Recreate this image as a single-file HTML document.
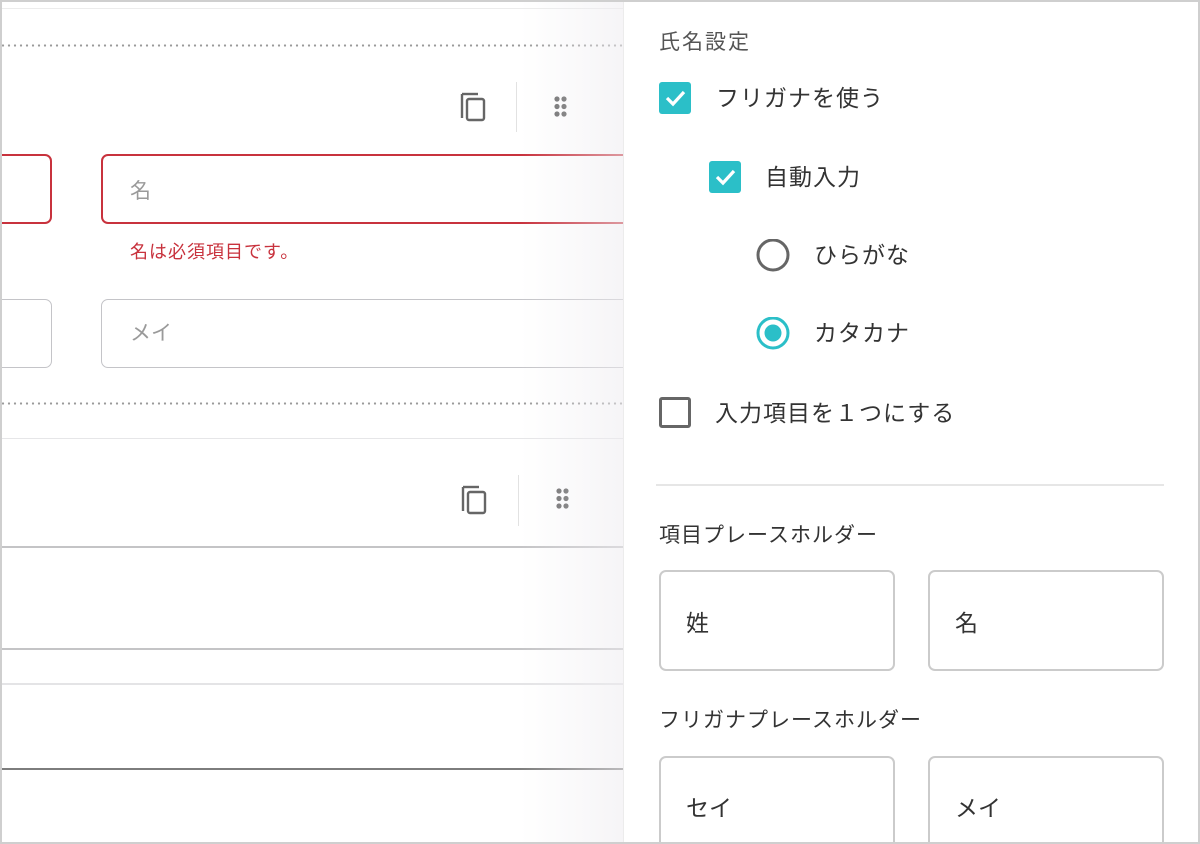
<!DOCTYPE html>
<html><head><meta charset="utf-8">
<style>
*{box-sizing:border-box;margin:0;padding:0}
html,body{width:1200px;height:844px;overflow:hidden;background:#fff}
body{font-family:"Liberation Sans","Noto Sans CJK JP",sans-serif;position:relative}
.frame{position:absolute;left:0;top:0;width:1200px;height:844px;border:2px solid #cfcfcf;pointer-events:none;z-index:10}
.left{position:absolute;left:0;top:0;width:623px;height:844px;background:#fff;overflow:hidden}
.shade{position:absolute;left:520px;top:0;width:103px;height:844px;background:linear-gradient(90deg,rgba(240,238,242,0),rgba(238,236,240,.55));}
.dots{position:absolute;left:0;width:623px;height:3px;background-image:radial-gradient(circle,#9a9a9a 1px,transparent 1.3px);background-size:6px 3px}
.hl{position:absolute;left:0;width:623px}
.abs{position:absolute}
.inp{position:absolute;border-radius:7px;background:#fff}
.t{position:absolute;white-space:nowrap;line-height:1}
.right{position:absolute;left:623px;top:0;width:577px;height:844px;background:#fff;border-left:1px solid #ececec}
.cb{position:absolute;width:32px;height:32px;border-radius:3px;background:#2bbfc8}
.rbox{position:absolute;border:2px solid #cbcbcb;border-radius:7px;background:#fff}
.o{font-size:23px;color:#333;letter-spacing:1px}
</style></head><body>
<div class="left">
  <div class="hl" style="top:8px;height:1px;background:#ececec"></div>
  <div class="dots" style="top:44px"></div>
  <svg class="abs" style="left:458px;top:90px" width="32" height="34" viewBox="0 0 32 34"><path d="M4 4 V28" stroke="#666" stroke-width="2.4" fill="none"/><path d="M4 4 H20" stroke="#666" stroke-width="2.4" fill="none"/><rect x="9" y="9" width="17" height="21" rx="2" stroke="#666" stroke-width="2.4" fill="none"/></svg>
  <div class="abs" style="left:516px;top:82px;width:1px;height:50px;background:#e2e2e2"></div>
  <svg class="abs" style="left:552px;top:96px" width="18" height="22"><g fill="#666"><circle cx="5" cy="3" r="2.6"/><circle cx="12" cy="3" r="2.6"/><circle cx="5" cy="10.5" r="2.6"/><circle cx="12" cy="10.5" r="2.6"/><circle cx="5" cy="18" r="2.6"/><circle cx="12" cy="18" r="2.6"/></g></svg>
  <div class="inp" style="left:-20px;top:154px;width:72px;height:70px;border:2px solid #c8323d"></div>
  <div class="inp" style="left:101px;top:154px;width:560px;height:70px;border:2px solid #c8323d"></div>
  <div class="t" style="left:130px;top:181px;font-size:21px;color:#9a9a9a">名</div>
  <div class="t" style="left:130px;top:243px;font-size:18px;color:#c8323d;letter-spacing:1px">名は必須項目です。</div>
  <div class="inp" style="left:-20px;top:299px;width:72px;height:69px;border:1.5px solid #c4c4c8"></div>
  <div class="inp" style="left:101px;top:299px;width:560px;height:69px;border:1.5px solid #c4c4c8"></div>
  <div class="t" style="left:130px;top:323px;font-size:21px;color:#9a9a9a">メイ</div>
  <div class="dots" style="top:402px"></div>
  <div class="hl" style="top:438px;height:1px;background:#e6e6e8"></div>
  <svg class="abs" style="left:459px;top:483px" width="32" height="34" viewBox="0 0 32 34"><path d="M4 4 V28" stroke="#666" stroke-width="2.4" fill="none"/><path d="M4 4 H20" stroke="#666" stroke-width="2.4" fill="none"/><rect x="9" y="9" width="17" height="21" rx="2" stroke="#666" stroke-width="2.4" fill="none"/></svg>
  <div class="abs" style="left:518px;top:475px;width:1px;height:51px;background:#e2e2e2"></div>
  <svg class="abs" style="left:554px;top:488px" width="18" height="22"><g fill="#666"><circle cx="5" cy="3" r="2.6"/><circle cx="12" cy="3" r="2.6"/><circle cx="5" cy="10.5" r="2.6"/><circle cx="12" cy="10.5" r="2.6"/><circle cx="5" cy="18" r="2.6"/><circle cx="12" cy="18" r="2.6"/></g></svg>
  <div class="hl" style="top:546px;height:2px;background:#c4c4c6"></div>
  <div class="hl" style="top:648px;height:2px;background:#c4c4c6"></div>
  <div class="hl" style="top:683px;height:2px;background:#e4e4e6"></div>
  <div class="hl" style="top:768px;height:2px;background:#7d7d7d"></div>
  <div class="shade"></div>
</div>
<div class="right">
  <div class="t" style="left:35px;top:32px;font-size:21px;color:#555;letter-spacing:2px">氏名設定</div>
  <div class="cb" style="left:35px;top:82px"><svg width="32" height="32"><path d="M8 16 L14 22 L25 10" stroke="#fff" stroke-width="3.2" fill="none"/></svg></div>
  <div class="t o" style="left:92px;top:87px">フリガナを使う</div>
  <div class="cb" style="left:85px;top:161px"><svg width="32" height="32"><path d="M8 16 L14 22 L25 10" stroke="#fff" stroke-width="3.2" fill="none"/></svg></div>
  <div class="t o" style="left:141px;top:166px">自動入力</div>
  <svg class="abs" style="left:131px;top:239px" width="36" height="34"><circle cx="18" cy="16" r="15" stroke="#666" stroke-width="3" fill="none"/></svg>
  <div class="t o" style="left:190px;top:244px">ひらがな</div>
  <svg class="abs" style="left:131px;top:317px" width="36" height="34"><circle cx="18" cy="16" r="15" stroke="#2bbfc8" stroke-width="3" fill="none"/><circle cx="18" cy="16" r="8.5" fill="#2bbfc8"/></svg>
  <div class="t o" style="left:190px;top:322px">カタカナ</div>
  <div class="abs" style="left:35px;top:397px;width:32px;height:31px;border:3px solid #666;border-radius:3px"></div>
  <div class="t o" style="left:91px;top:402px">入力項目を１つにする</div>
  <div class="abs" style="left:32px;top:484px;width:508px;height:1.5px;background:#e6e6e6"></div>
  <div class="t" style="left:35px;top:525px;font-size:21px;color:#333;letter-spacing:1px">項目プレースホルダー</div>
  <div class="rbox" style="left:35px;top:570px;width:236px;height:101px"></div>
  <div class="rbox" style="left:304px;top:570px;width:236px;height:101px"></div>
  <div class="t" style="left:62px;top:612px;font-size:23px;color:#333">姓</div>
  <div class="t" style="left:331px;top:612px;font-size:23px;color:#333">名</div>
  <div class="t" style="left:35px;top:710px;font-size:21px;color:#333;letter-spacing:1px">フリガナプレースホルダー</div>
  <div class="rbox" style="left:35px;top:756px;width:236px;height:110px"></div>
  <div class="rbox" style="left:304px;top:756px;width:236px;height:110px"></div>
  <div class="t" style="left:62px;top:797px;font-size:23px;color:#333">セイ</div>
  <div class="t" style="left:331px;top:797px;font-size:23px;color:#333">メイ</div>
</div>
<div class="frame"></div>
</body></html>
